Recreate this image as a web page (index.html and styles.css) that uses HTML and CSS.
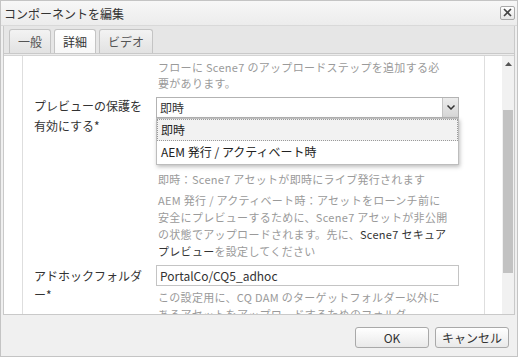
FILE: index.html
```html
<!DOCTYPE html>
<html lang="ja">
<head>
    <meta charset="UTF-8">
    <title>コンポーネントを編集</title>
    <link rel="stylesheet" href="styles.css">
</head>
<body>

<div class="dialog">
    <div class="titlebar">
        <span class="title">コンポーネントを編集</span>
        <span class="close">
            <svg width="9" height="9" viewBox="0 0 9 9"><path d="M1 1 L8 8 M8 1 L1 8" stroke="#444" stroke-width="1.6" fill="none"/></svg>
        </span>
    </div>

    <div class="body">
        <div class="tabpanel">
            <div class="tabstrip">
                <span class="tab">一般</span>
                <span class="tab active">詳細</span>
                <span class="tab">ビデオ</span>
            </div>
            <div class="strip-foot"></div>

            <div class="tabbody">
                <div class="gutter"></div>
                <div class="form">
                    <div class="row">
                        <div class="label"></div>
                        <div class="field">
                            <div class="help first">フローに Scene7 のアップロードステップを追加する必<br>要があります。</div>
                        </div>
                    </div>

                    <div class="row row-select">
                        <div class="label">プレビューの保護を<br>有効にする*</div>
                        <div class="field">
                            <div class="select">
                                <span class="select-value">即時</span>
                                <span class="select-arrow">
                                    <svg width="8" height="5" viewBox="0 0 8 5"><path d="M0.5 0.5 L4 4 L7.5 0.5" stroke="#333" stroke-width="1.5" fill="none"/></svg>
                                </span>
                                <div class="dropdown">
                                    <div class="option selected">即時</div>
                                    <div class="option">AEM 発行 / アクティベート時</div>
                                </div>
                            </div>
                            <div class="help after-select">即時：Scene7 アセットが即時にライブ発行されます</div>
                            <div class="help para">AEM 発行 / アクティベート時：アセットをローンチ前に<br>安全にプレビューするために、Scene7 アセットが非公開<br>の状態でアップロードされます。先に、<span class="strong">Scene7 セキュア<br>プレビュー</span>を設定してください</div>
                        </div>
                    </div>

                    <div class="row row-input">
                        <div class="label">アドホックフォルダ<br>ー*</div>
                        <div class="field">
                            <div class="input">PortalCo/CQ5_adhoc</div>
                            <div class="help under-input">この設定用に、CQ DAM のターゲットフォルダー以外に<br>あるアセットをアップロードするためのフォルダー</div>
                        </div>
                    </div>
                </div>
                <div class="spacer"></div>
                <div class="scrollbar">
                    <span class="scroll-up">
                        <svg width="7" height="4" viewBox="0 0 7 4"><path d="M0 4 L3.5 0 L7 4 Z" fill="#555"/></svg>
                    </span>
                    <div class="thumb"></div>
                </div>
            </div>
        </div>
    </div>

    <div class="footer">
        <span class="btn">OK</span>
        <span class="btn">キャンセル</span>
    </div>
</div>

</body>
</html>
```

FILE: styles.css
```css
/* Global */
body {
    margin: 0;
    font-family: 'Noto Sans CJK JP', 'Noto Sans', sans-serif;
    color: #333;
    background: #fff;
}

.dialog {
    width: 518px;
    height: 357px;
    box-sizing: border-box;
    border: 1px solid #c4c4c4;
    background: #f0f0f0;
    display: flex;
    flex-direction: column;
}

/* Title bar */
.titlebar {
    height: 24px;
    flex: none;
    display: flex;
    align-items: center;
    justify-content: space-between;
    padding: 0 2px 0 3px;
    background: linear-gradient(#f7f7f7, #ececec);
    border-bottom: 1px solid #d9d9d9;
}

.title {
    font-size: 12px;
    color: #333;
}

.close {
    width: 13px;
    height: 12px;
    border: 1px solid #a9a9a9;
    border-radius: 2px;
    background: linear-gradient(#fff, #e6e6e6);
    display: flex;
    align-items: center;
    justify-content: center;
    margin-top: -1px;
}

/* Tab panel */
.body {
    padding: 0 2px;
    flex: none;
}

.tabpanel {
    border: 1px solid #c9c9c9;
    border-top: none;
}

.tabstrip {
    height: 24px;
    padding: 3px 0 0 5px;
    background: #e6e6e6;
    border-bottom: 1px solid #c9c9c9;
    display: flex;
    align-items: flex-end;
    gap: 3px;
}

.tab {
    height: 23px;
    padding: 0 8px;
    font-size: 12px;
    line-height: 23px;
    color: #555;
    border: 1px solid #c4c4c4;
    border-bottom: none;
    border-radius: 3px 3px 0 0;
    background: linear-gradient(#f3f3f3, #e2e2e2);
}

.tab.active {
    background: linear-gradient(#fff, #f7f7f7);
    color: #333;
}

.strip-foot {
    height: 1px;
    background: #ececec;
    border-bottom: 1px solid #d4d4d4;
}

.tabbody {
    height: 258px;
    display: flex;
    background: #fff;
    overflow: hidden;
}

.gutter {
    width: 18px;
    flex: none;
    border-right: 1px solid #dedede;
}

.form {
    width: 436px;
    flex: none;
    padding: 3px 14px 0 11px;
    border-right: 1px solid #dedede;
    overflow: hidden;
}

.spacer {
    flex: 1;
}

.scrollbar {
    width: 12px;
    flex: none;
    background: #f1f1f1;
    display: flex;
    flex-direction: column;
    align-items: center;
}

.scroll-up {
    height: 16px;
    display: flex;
    align-items: center;
}

.thumb {
    width: 10px;
    height: 163px;
    margin-top: 38px;
    background: #c2c2c2;
}

/* Form rows */
.row {
    display: flex;
    align-items: flex-start;
}

.label {
    width: 122px;
    flex: none;
    font-size: 12px;
    line-height: 20px;
    color: #333;
    white-space: nowrap;
}

.field {
    width: 303px;
}

.help {
    font-size: 11px;
    line-height: 17px;
    color: #9a9a9a;
    letter-spacing: 0.3px;
    white-space: nowrap;
}

.help.first {
    line-height: 16px;
    padding-left: 2px;
}

.help .strong {
    color: #333;
}

.row-select {
    margin-top: 6px;
}

.row-select .label {
    margin-top: -1px;
}

.select {
    position: relative;
    height: 19px;
    border: 1px solid #b3b3b3;
    display: flex;
    align-items: center;
    justify-content: space-between;
    font-size: 12px;
}

.select-value {
    padding-left: 3px;
}

.select-arrow {
    width: 15px;
    height: 19px;
    background: linear-gradient(#ececec, #d6d6d6);
    border-left: 1px solid #c4c4c4;
    display: flex;
    align-items: center;
    justify-content: center;
}

.dropdown {
    position: absolute;
    top: 20px;
    left: -1px;
    right: -1px;
    background: #fff;
    border: 1px solid #bdbdbd;
    box-shadow: 1px 2px 4px rgba(0, 0, 0, 0.25);
    padding-bottom: 1px;
    z-index: 10;
}

.option {
    height: 20px;
    line-height: 20px;
    padding-left: 3px;
    font-size: 12px;
    color: #222;
    border: 1px solid transparent;
}

.option.selected {
    background: #f2f2f2;
    border: 1px dotted #9a9a9a;
}

.help.after-select {
    margin-top: 53px;
    padding-left: 2px;
}

.help.para {
    margin-top: 4px;
    padding-left: 2px;
}

.row-input {
    margin-top: 5px;
}

.row-input .label {
    line-height: 19px;
    margin-top: 1px;
}

.input {
    height: 19px;
    border: 1px solid #c4c4c4;
    font-size: 12px;
    line-height: 19px;
    padding-left: 3px;
}

.help.under-input {
    margin-top: 3px;
    padding-left: 2px;
}

/* Footer */
.footer {
    flex: 1;
    display: flex;
    justify-content: flex-end;
    align-items: flex-start;
    gap: 6px;
    padding: 12px 8px 0 0;
}

.btn {
    height: 19px;
    line-height: 19px;
    min-width: 72px;
    text-align: center;
    font-size: 12px;
    color: #333;
    border: 1px solid #a9a9a9;
    border-radius: 3px;
    background: linear-gradient(#fff, #e9e9e9);
}
```
